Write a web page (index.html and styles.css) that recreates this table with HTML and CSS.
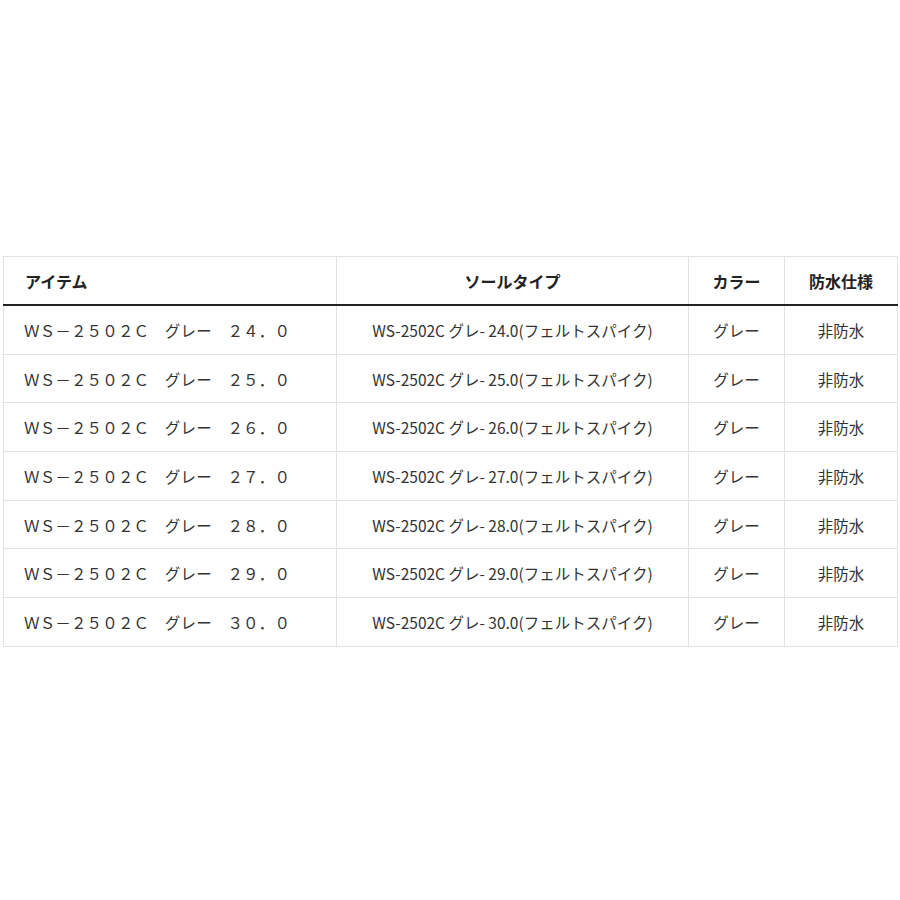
FILE: index.html
```html
<!DOCTYPE html>
<html lang="ja">
<head>
<meta charset="utf-8">
<link rel="stylesheet" href="styles.css">
</head>
<body>
<div class="wrap">
<table class="spec">
  <colgroup>
    <col class="c1"><col class="c2"><col class="c3"><col class="c4">
  </colgroup>
  <thead>
    <tr><th class="left">アイテム</th><th>ソールタイプ</th><th>カラー</th><th>防水仕様</th></tr>
  </thead>
  <tbody>
    <tr><td class="item">ＷＳ－２５０２Ｃ　グレー　２４．０</td><td>WS-2502C グレ- 24.0(フェルトスパイク)</td><td>グレー</td><td>非防水</td></tr>
    <tr><td class="item">ＷＳ－２５０２Ｃ　グレー　２５．０</td><td>WS-2502C グレ- 25.0(フェルトスパイク)</td><td>グレー</td><td>非防水</td></tr>
    <tr><td class="item">ＷＳ－２５０２Ｃ　グレー　２６．０</td><td>WS-2502C グレ- 26.0(フェルトスパイク)</td><td>グレー</td><td>非防水</td></tr>
    <tr><td class="item">ＷＳ－２５０２Ｃ　グレー　２７．０</td><td>WS-2502C グレ- 27.0(フェルトスパイク)</td><td>グレー</td><td>非防水</td></tr>
    <tr><td class="item">ＷＳ－２５０２Ｃ　グレー　２８．０</td><td>WS-2502C グレ- 28.0(フェルトスパイク)</td><td>グレー</td><td>非防水</td></tr>
    <tr><td class="item">ＷＳ－２５０２Ｃ　グレー　２９．０</td><td>WS-2502C グレ- 29.0(フェルトスパイク)</td><td>グレー</td><td>非防水</td></tr>
    <tr><td class="item">ＷＳ－２５０２Ｃ　グレー　３０．０</td><td>WS-2502C グレ- 30.0(フェルトスパイク)</td><td>グレー</td><td>非防水</td></tr>
  </tbody>
</table>
</div>
</body>
</html>
```

FILE: styles.css
```css
html, body {
  margin: 0;
  padding: 0;
  background: #fff;
}
body {
  font-family: "Noto Sans CJK JP", "Noto Sans", sans-serif;
  color: #333;
}
.wrap {
  padding: 256px 0 0 3px;
}
.spec {
  border-collapse: collapse;
  table-layout: fixed;
  width: 894px;
}
.c1 { width: 333px; }
.c2 { width: 352px; }
.c3 { width: 96px; }
.c4 { width: 113px; }
.spec th, .spec td {
  border: 1px solid #e2e2e2;
  text-align: center;
  font-size: 15.5px;
  padding: 0 6px;
  white-space: nowrap;
  overflow: hidden;
}
.spec th {
  height: 47px;
  font-size: 16px;
  font-weight: bold;
  color: #222;
  border-bottom: 2px solid #222;
}
.spec td {
  height: 47.7px;
}
.spec th.left {
  text-align: left;
  padding-left: 21px;
}
.spec td.item {
  text-align: left;
  padding-left: 20px;
  font-size: 15.5px;
  letter-spacing: 0.15px;
  color: #333;
}
```
